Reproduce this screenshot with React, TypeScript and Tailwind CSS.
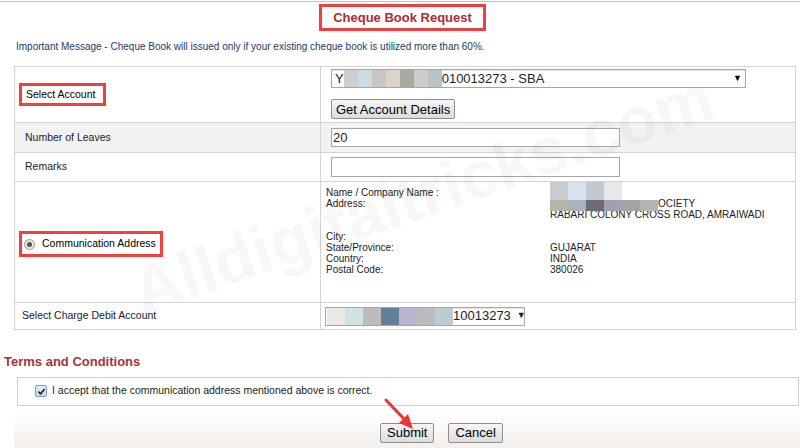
import React from 'react';

const font = { fontFamily: '"Liberation Sans", Arial, sans-serif' };

function Blur({ colors, w = 14, h = 12 }: { colors: string[]; w?: number; h?: number }) {
  return (
    <span className="inline-flex align-middle">
      {colors.map((c, i) => (
        <span key={i} style={{ background: c, width: w, height: h }} className="inline-block" />
      ))}
    </span>
  );
}

const btn =
  'h-[20px] px-[6px] text-[13px] leading-none border border-[#8f8f8f] rounded-[2px] bg-gradient-to-b from-[#f6f6f6] to-[#dcdcdc] text-black';

export default function App() {
  return (
    <div style={font} className="relative w-[800px] h-[448px] overflow-hidden bg-white text-[#222]">
      <div className="mt-px border-t border-[#c4c4c4]" />

      {/* Title */}
      <div className="flex justify-center pt-[2px] pl-[5px]">
        <div className="h-[27px] px-[11px] flex items-center border-[3px] border-[#ef3f3f]">
          <span className="text-[13px] font-bold text-[#b02a30]">Cheque Book Request</span>
        </div>
      </div>

      <p className="mt-[8px] ml-[16px] text-[10px] text-[#1c3a66]">
        Important Message - Cheque Book will issued only if your existing cheque book is utilized more than 60%.
      </p>

      {/* Form table */}
      <div className="mt-[12px] ml-[14px] w-[782px] border border-[#d4d4d4] text-[10.5px]">
        {/* Select Account */}
        <div className="grid grid-cols-[306px_1fr] h-[56px] border-b border-[#d4d4d4]">
          <div className="flex items-center pl-[4px] border-r border-[#d4d4d4]">
            <span className="border-[3px] border-[#ef3f3f] h-[23px] w-[87px] flex items-center pl-[4px] text-black">
              Select Account
            </span>
          </div>
          <div className="pl-[10px] pt-[2px]">
            <div className="w-[415px] h-[19px] flex items-center border border-[#a6a6a6] bg-white text-[13px] pl-[3px] shadow-[inset_0_1px_1px_rgba(0,0,0,0.1)]">
              <span>Y</span>
              <Blur colors={['#cfcfd3', '#cbdde4', '#c6c6c4', '#dcd4cc', '#a9a99f', '#cdcdcd', '#b8c4c8']} w={14} h={17} />
              <span>010013273 - SBA</span>
              <span className="ml-auto pr-[3px] text-[9px] text-black leading-none">▼</span>
            </div>
            <button className="mt-[11px] h-[20px] px-[4px] text-[13px] leading-none border border-[#8f8f8f] rounded-[2px] bg-gradient-to-b from-[#f6f6f6] to-[#dcdcdc] text-black">
              Get Account Details
            </button>
          </div>
        </div>

        {/* Number of leaves */}
        <div className="grid grid-cols-[306px_1fr] h-[30px] border-b border-[#d4d4d4] bg-[#f2f2f2]">
          <div className="flex items-center pl-[10px] border-r border-[#d4d4d4]">Number of Leaves</div>
          <div className="flex items-center pl-[10px]">
            <div className="w-[289px] h-[19px] border border-[#a6a6a6] bg-white text-[13px] pl-[1px] flex items-center">20</div>
          </div>
        </div>

        {/* Remarks */}
        <div className="grid grid-cols-[306px_1fr] h-[29px] border-b border-[#d4d4d4]">
          <div className="flex items-center pl-[10px] border-r border-[#d4d4d4]">Remarks</div>
          <div className="flex items-center pl-[10px]">
            <div className="w-[289px] h-[20px] border border-[#a6a6a6] bg-white" />
          </div>
        </div>

        {/* Communication address */}
        <div className="grid grid-cols-[306px_1fr] h-[121px] border-b border-[#d4d4d4]">
          <div className="flex items-center pl-[4px] border-r border-[#d4d4d4]">
            <div className="mt-[4px] h-[26px] w-[144px] border-[3px] border-[#ef3f3f] flex items-center pl-[2px] gap-[7px] text-black">
              <span className="w-[11px] h-[11px] rounded-full border border-[#9a9a9a] bg-[#e8e8e8] flex items-center justify-center">
                <span className="w-[5px] h-[5px] rounded-full bg-[#555]" />
              </span>
              Communication Address
            </div>
          </div>
          <div className="pl-[5px] pt-[5px] text-[10px] leading-[11px] text-[#222] flex">
            <div className="w-[224px]">
              <div>Name / Company Name :</div>
              <div>Address:</div>
              <div className="h-[22px]" />
              <div>City:</div>
              <div>State/Province:</div>
              <div>Country:</div>
              <div>Postal Code:</div>
            </div>
            <div className="relative">
              <div className="h-[11px]" />
              <div className="h-[11px] pl-[108px]">OCIETY</div>
              <div>RABARI COLONY CROSS ROAD, AMRAIWADI</div>
              <div className="h-[22px]" />
              <div>GUJARAT</div>
              <div>INDIA</div>
              <div>380026</div>
              <span className="absolute left-0 -top-[5px]">
                <Blur colors={['#c8ccd0', '#d6e2ee', '#c0c8d0', '#e6e8ec']} w={18} h={22} />
              </span>
              <span className="absolute left-0 top-[12px]">
                <Blur colors={['#b9b4a6', '#aab3bb', '#6f6a78', '#a29fae', '#a4a4a2', '#b6b4b2']} w={18} h={11} />
              </span>
            </div>
          </div>
        </div>

        {/* Charge debit account */}
        <div className="grid grid-cols-[306px_1fr] h-[26px]">
          <div className="flex items-center pl-[7px] border-r border-[#d4d4d4]">Select Charge Debit Account</div>
          <div className="flex items-center pl-[4px]">
            <div className="w-[200px] h-[19px] flex items-center border border-[#a6a6a6] bg-white text-[13px] pl-[1px] shadow-[inset_0_1px_1px_rgba(0,0,0,0.1)]">
              <Blur colors={['#ece8e2', '#cde4e2', '#bcbcbc', '#63809a', '#bcb4cc', '#bcbcbc', '#b9cdd2']} w={18} h={17} />
              <span>10013273</span>
              <span className="ml-[6px] text-[9px]">▼</span>
            </div>
          </div>
        </div>
      </div>

      {/* Terms */}
      <h2 className="mt-[22px] ml-[4px] text-[13px] font-bold text-[#a8323a]">Terms and Conditions</h2>
      <div className="mt-[5px] ml-[17px] w-[782px] h-[29px] border border-[#cfcfcf] flex items-center pl-[17px] gap-[5px] text-[10.5px]">
        <span className="w-[12px] h-[12px] rounded-[2px] border border-[#7f9db9] bg-gradient-to-b from-[#e8eef6] to-[#c9d6e6] flex items-center justify-center">
          <svg viewBox="0 0 10 10" className="w-[9px] h-[9px]">
            <path d="M1.5 5.2 L4 7.6 L8.5 2.2" fill="none" stroke="#222" strokeWidth="1.8" />
          </svg>
        </span>
        <span>I accept that the communication address mentioned above is correct.</span>
      </div>

      {/* Buttons */}
      <div className="mt-[5px] ml-[14px] h-[38px] bg-gradient-to-b from-white to-[#f3efeb] flex items-end pb-[6px] pl-[366px] gap-[14px]">
        <button className={btn}>Submit</button>
        <button className={btn}>Cancel</button>
      </div>

      {/* Watermark */}
      <div className="absolute left-[135px] top-[244px] -rotate-[19deg] origin-left pointer-events-none text-[66px] font-bold text-black/[0.03] whitespace-nowrap">
        Alldigitaltricks.com
      </div>

      {/* Red arrow */}
      <svg className="absolute left-0 top-0 pointer-events-none" width="800" height="448">
        <line x1="386" y1="400" x2="406" y2="421" stroke="#ee3333" strokeWidth="3" strokeLinecap="round" />
        <polygon points="413,429 399,423 408,414" fill="#ee3333" />
      </svg>
    </div>
  );
}
